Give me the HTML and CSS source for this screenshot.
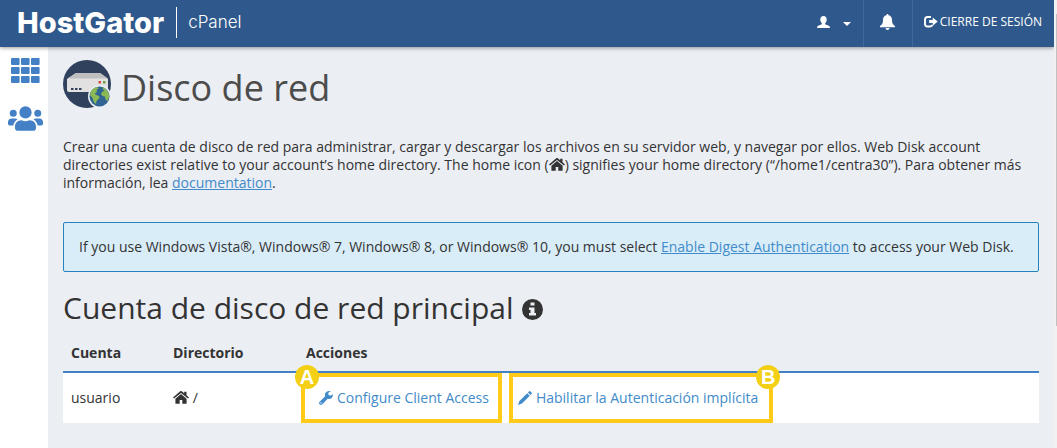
FILE: index.html
```
<!DOCTYPE html>
<html lang="es">
<head>
<meta charset="utf-8">
<title>Disco de red - cPanel</title>
<link rel="stylesheet" href="styles.css">
</head>
<body>
<svg class="defs" aria-hidden="true">
  <symbol id="home" viewBox="0 0 16 13"><path d="M8 3.100 2.400 7.700V12.200q0 .6.600.6H6.700V9H9.300v3.800H13q.6 0 .6-.6V7.700z"/><path d="M7.200.3Q8-.2 8.800.3L11.200 2.300V.8h2.300v3.400L16 6.400l-1 1.200L8 1.900 1 7.600 0 6.400z"/></symbol>
</svg>
<header class="topbar">
  <a class="brand" href="#"><span class="brand-name">HostGator</span><span class="brand-product">cPanel</span></a>
  <nav class="top-actions">
    <button class="top-item user" type="button" aria-label="Usuario">
      <svg class="user-icon" viewBox="0 0 13 12"><path d="M6.500 0C8.600 0 9.700 1.400 9.700 3.600 9.700 5.200 9 6.500 8.200 7.300V8.300L11.800 9.700Q13 10.200 13 12H0Q0 10.200 1.200 9.700L4.800 8.300V7.300C4 6.500 3.300 5.200 3.300 3.600 3.300 1.400 4.400 0 6.500 0z"/></svg>
      <svg class="caret" viewBox="0 0 8 4"><path d="M0 0H8L4 4z"/></svg>
    </button>
    <button class="top-item bell" type="button" aria-label="Notificaciones">
      <svg class="bell-icon" viewBox="0 0 15 16"><path d="M7.500 0q1 0 1 1.200C11 1.700 12 3.600 12 6c0 3.500 1 4.800 3 6v1.200H0V12C2 10.800 3 9.500 3 6 3 3.600 4 1.700 6.500 1.200 6.500.2 7 0 7.500 0zM5.400 14h4.200q-.4 2-2.100 2T5.400 14z"/></svg>
    </button>
    <a class="top-item logout" href="#">
      <svg class="logout-icon" viewBox="0 0 14 12"><path d="M7 1H3.500Q1 1 1 3.500V8q0 2.500 2.500 2.500H6q2 0 2.300-1.600" fill="none" stroke="#fff" stroke-width="1.900"/><path d="M8.700 1.500 13.700 5.600 8.700 9.700V7.100H5.200V4.100H8.700z"/></svg>CIERRE DE SESIÓN
    </a>
  </nav>
</header>
<div class="shell">
  <nav class="sidebar">
    <a href="#" aria-label="Inicio"><svg class="grid-icon" viewBox="0 0 29 25"><g><rect width="8.600" height="7" rx="1"/><rect x="10" width="8.600" height="7" rx="1"/><rect x="20" width="8.600" height="7" rx="1"/><rect y="9" width="8.600" height="7" rx="1"/><rect x="10" y="9" width="8.600" height="7" rx="1"/><rect x="20" y="9" width="8.600" height="7" rx="1"/><rect y="18" width="8.600" height="7" rx="1"/><rect x="10" y="18" width="8.600" height="7" rx="1"/><rect x="20" y="18" width="8.600" height="7" rx="1"/></g></svg></a>
    <a href="#" aria-label="Usuarios"><svg class="users-icon" viewBox="0 0 640 448"><path d="M96 192a64 64 0 1 0 0-128 64 64 0 0 0 0 128zm448 0a64 64 0 1 0 0-128 64 64 0 0 0 0 128zm32 32h-64c-17.600 0-33.500 7.100-45.100 18.600 40.300 22.100 68.900 62 75.100 109.400h66c17.700 0 32-14.300 32-32v-32c0-35.300-28.700-64-64-64zM320 224a112 112 0 1 0 0-224 112 112 0 0 0 0 224zm76.800 32h-8.300c-20.800 10-43.900 16-68.500 16s-47.600-6-68.500-16h-8.300C179.600 256 128 307.600 128 371.200V400c0 26.500 21.500 48 48 48h288c26.500 0 48-21.500 48-48v-28.800c0-63.600-51.600-115.200-115.200-115.200zM173.100 242.600C161.500 231.100 145.600 224 128 224H64c-35.300 0-64 28.700-64 64v32c0 17.700 14.300 32 32 32h65.900c6.300-47.400 34.900-87.300 75.200-109.400z"/></svg></a>
  </nav>
  <main class="content">
    <h1 class="page-title">
      <svg class="disk-icon" viewBox="0 0 48 48"><circle cx="24" cy="24" r="24" fill="#30415d"/><path d="M13 13H37L45 19V30Q45 32 43 32H6Q4 32 4 30V19z" fill="#e1e1e1"/><path d="M13 13H37L45 18.500H4.500z" fill="#bfbfbf"/><g fill="#30415d"><path d="M8 28h2.500v2H8zM12 28h2.500v2H12zM16 28h2.500v2H16z"/></g><path d="M35.500 21H38v2.500h-2.500z" fill="#dc4b3e"/><path d="M40 21h2.500v2.500H40z" fill="#6f9e3c"/><circle cx="36.500" cy="36.500" r="11.500" fill="#ebeef3"/><circle cx="36.500" cy="36.500" r="10" fill="#306493"/><path d="M27.500 32Q30 27.700 34.500 27l1 1.500-2 1.500.5 2-2 1 .5 1.500 3.500 1.500.5 2-3 3-.5 3Q30 42 29.500 38l-2.500-3zM39 27.200Q44 29 46 34l.3 3-2 4-1.800-1.500-.5-3-2.500-.5-1.500-2 1.500-2.500 2-.5-1-1z" fill="#8ab956"/></svg>
      <span class="page-name">Disco de red</span>
    </h1>
    <p class="intro">Crear una cuenta de disco de red para administrar, cargar y descargar los archivos en su servidor web, y navegar por ellos. Web Disk account directories exist relative to your account’s home directory. The home icon (<svg class="home-icon"><use href="#home"/></svg>) signifies your home directory (“/home1/centra30”). Para obtener más información, lea <a href="#">documentation</a>.</p>
    <div class="notice">If you use Windows Vista®, Windows® 7, Windows® 8, or Windows® 10, you must select <a href="#">Enable Digest Authentication</a> to access your Web Disk.</div>
    <h2 class="section-title">Cuenta de disco de red principal
      <svg class="info-icon" viewBox="0 0 21 21"><circle cx="10.500" cy="10.500" r="10.500"/><path d="M8.500 3.500h4v3h-4zM7 8.500h5.500V14H14v2.500H7V14h1.500v-3H7z" fill="#ebeef3"/></svg>
    </h2>
    <table class="accounts">
      <thead><tr><th class="col-account" scope="col">Cuenta</th><th class="col-dir" scope="col">Directorio</th><th scope="col">Acciones</th></tr></thead>
      <tbody><tr>
        <td>usuario</td>
        <td><svg class="home-icon"><use href="#home"/></svg> /</td>
        <td class="actions-cell"><div class="actions">
          <a class="action first" href="#"><svg class="action-icon" viewBox="0 0 14 14"><path d="M13.700 3.200 11.200 4.700 9.400 3.700V1.700L11.800.3C9.800-.4 7.400.2 6.300 2.200 5.800 3.200 5.800 4.300 6.200 5.300L.6 10.800Q-.4 12 .6 13.300 1.900 14.400 3.200 13.400L8.700 7.800C11.800 8.700 14.400 6.200 13.700 3.200zM2 11.300a.7.7 0 1 1 0 1.400.7.7 0 0 1 0-1.400z"/></svg>Configure Client Access<span class="badge badge-start">A</span></a>
          <a class="action second" href="#"><svg class="action-icon" viewBox="0 0 14 14"><path d="M10.900.5Q11.700-.3 12.500.5L13.500 1.500Q14.300 2.300 13.500 3.100L12.500 4.100 9.900 1.500zM9.200 2.200 11.800 4.800 4 12.600 0 14 1.400 10z"/></svg>Habilitar la Autenticación implícita<span class="badge badge-end">B</span></a>
        </div></td>
      </tr></tbody>
    </table>
  </main>
</div>
<div class="scroll-track" aria-hidden="true"><div class="scroll-thumb"></div></div>
</body>
</html>
```
FILE: styles.css
```
* { box-sizing: border-box; }
body {
  margin: 0;
  min-height: 100vh;
  padding-right: 3px;
  display: flex;
  flex-direction: column;
  background: #ebeef3;
  color: #333;
  font: 14px/18px "Open Sans", sans-serif;
}
svg { fill: currentColor; }
a { color: #428bca; }
.defs { display: none; }

.topbar {
  position: relative;
  height: 47px;
  display: flex;
  justify-content: space-between;
  background: #2f598c;
  color: #fff;
  box-shadow: 0 1px 4px rgba(0, 0, 0, 0.4);
}
.brand {
  display: flex;
  align-items: center;
  padding: 0 0 2px 17px;
  color: #fff;
  font-family: Inter, sans-serif;
  text-decoration: none;
}
.brand-name { font-size: 29px; font-weight: 800; padding-right: 12px; }
.brand-product {
  padding-left: 11px;
  border-left: 1px solid #fff;
  font-size: 17px;
  font-weight: 300;
  line-height: 31px;
}
.top-actions { display: flex; }
.top-item {
  display: flex;
  align-items: center;
  padding: 0 12px;
  padding-bottom: 4px;
  border: 0;
  background: none;
  color: #fff;
  font: 12px/18px "Open Sans", sans-serif;
  text-decoration: none;
}
.user { gap: 13px; }
.bell, .logout { border-left: 1px solid #41699a; }
.bell { padding-left: 16px; padding-right: 17px; }
.logout { padding-left: 11px; gap: 2px; }
.user-icon { width: 13px; height: 12px; }
.caret { width: 8px; height: 4px; margin-top: 4px; }
.bell-icon { width: 15px; height: 16px; }
.logout-icon { width: 14px; height: 12px; }

.shell { flex: 1; display: flex; }
.sidebar {
  width: 48px;
  flex: none;
  display: flex;
  flex-direction: column;
  align-items: center;
  gap: 23px;
  padding: 11px 0 0 3px;
  background: #fff;
}
.sidebar a { display: flex; color: #4480c5; }
.grid-icon { width: 29px; height: 25px; }
.users-icon { width: 35px; height: 25px; }

.content { flex: 1; min-width: 0; padding: 13px 15px; }
.page-title {
  display: flex;
  align-items: flex-start;
  gap: 10px;
  margin: 0 0 24px;
  color: #4c4c4c;
  font-size: 36px;
  font-weight: 400;
}
.page-name { padding: 4px 0 2px; line-height: 48px; }
.disk-icon { width: 48px; height: 48px; }
.intro { margin: 0 0 30px; }
.home-icon { width: 16px; height: 13px; vertical-align: -1px; }
.notice {
  padding: 15px;
  border: 1px solid #2783bd;
  border-radius: 2px;
  background: #d9edf9;
}
.section-title {
  display: flex;
  align-items: center;
  gap: 8px;
  margin: 16px 0 4px;
  font-size: 30px;
  font-weight: 400;
  line-height: 40px;
}
.info-icon { width: 21px; height: 21px; margin-top: 3px; }

.accounts { width: 100%; border-collapse: collapse; }
.accounts th {
  height: 40px;
  padding: 2px 8px 0;
  border-bottom: 2px solid #4480c5;
  text-align: left;
  font-weight: 700;
}
.accounts td { padding: 0 8px; background: #fff; }
.col-account { width: 102px; }
.col-dir { width: 133px; }
.accounts .actions-cell { padding: 0 3px; }
.actions { display: flex; gap: 7px; }
.action {
  position: relative;
  display: flex;
  align-items: center;
  gap: 4px;
  height: 50px;
  border: 4px solid #ffca18;
  text-decoration: none;
}
.first { padding: 0 9px 0 14px; }
.second { padding: 0 11px 0 5px; }
.action-icon { width: 14px; height: 14px; }
.badge {
  position: absolute;
  top: -12px;
  width: 24px;
  height: 24px;
  border-radius: 50%;
  background: #f3d016;
  color: #fff;
  font: 700 20px/24px "Liberation Sans", sans-serif;
  text-align: center;
}
.badge-start { left: -10px; }
.badge-end { right: -11px; }

.scroll-track {
  position: absolute;
  top: 0;
  right: 0;
  width: 3px;
  height: 100%;
  padding: 14px 0 0 2px;
  background: #f1f1f1;
}
.scroll-thumb { height: 72%; background: #c1c1c1; }
```
